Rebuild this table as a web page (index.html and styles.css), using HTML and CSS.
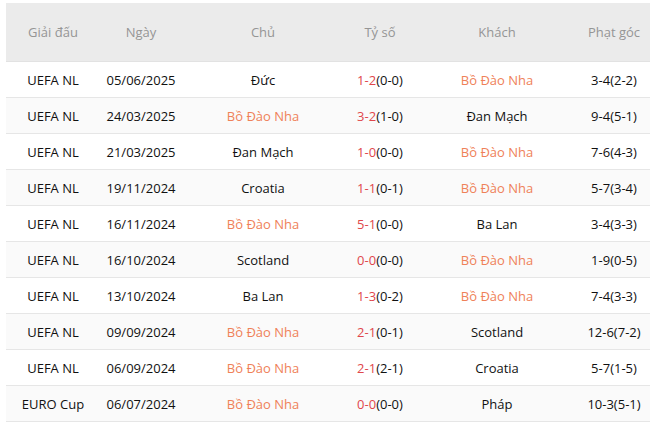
FILE: index.html
```html
<!DOCTYPE html>
<html lang="vi">
<head>
<meta charset="utf-8">
<link rel="stylesheet" href="styles.css">
</head>
<body>
<table class="tbl">
  <colgroup>
    <col class="c1"><col class="c2"><col class="c3"><col class="c4"><col class="c5"><col class="c6">
  </colgroup>
  <thead>
    <tr><th>Giải đấu</th><th>Ngày</th><th>Chủ</th><th>Tỷ số</th><th>Khách</th><th>Phạt góc</th></tr>
  </thead>
  <tbody>
    <tr><td>UEFA NL</td><td>05/06/2025</td><td>Đức</td><td><span class="ft">1-2</span>(0-0)</td><td class="pt">Bồ Đào Nha</td><td>3-4(2-2)</td></tr>
    <tr><td>UEFA NL</td><td>24/03/2025</td><td class="pt">Bồ Đào Nha</td><td><span class="ft">3-2</span>(1-0)</td><td>Đan Mạch</td><td>9-4(5-1)</td></tr>
    <tr><td>UEFA NL</td><td>21/03/2025</td><td>Đan Mạch</td><td><span class="ft">1-0</span>(0-0)</td><td class="pt">Bồ Đào Nha</td><td>7-6(4-3)</td></tr>
    <tr><td>UEFA NL</td><td>19/11/2024</td><td>Croatia</td><td><span class="ft">1-1</span>(0-1)</td><td class="pt">Bồ Đào Nha</td><td>5-7(3-4)</td></tr>
    <tr><td>UEFA NL</td><td>16/11/2024</td><td class="pt">Bồ Đào Nha</td><td><span class="ft">5-1</span>(0-0)</td><td>Ba Lan</td><td>3-4(3-3)</td></tr>
    <tr><td>UEFA NL</td><td>16/10/2024</td><td>Scotland</td><td><span class="ft">0-0</span>(0-0)</td><td class="pt">Bồ Đào Nha</td><td>1-9(0-5)</td></tr>
    <tr><td>UEFA NL</td><td>13/10/2024</td><td>Ba Lan</td><td><span class="ft">1-3</span>(0-2)</td><td class="pt">Bồ Đào Nha</td><td>7-4(3-3)</td></tr>
    <tr><td>UEFA NL</td><td>09/09/2024</td><td class="pt">Bồ Đào Nha</td><td><span class="ft">2-1</span>(0-1)</td><td>Scotland</td><td>12-6(7-2)</td></tr>
    <tr><td>UEFA NL</td><td>06/09/2024</td><td class="pt">Bồ Đào Nha</td><td><span class="ft">2-1</span>(2-1)</td><td>Croatia</td><td>5-7(1-5)</td></tr>
    <tr><td>EURO Cup</td><td>06/07/2024</td><td class="pt">Bồ Đào Nha</td><td><span class="ft">0-0</span>(0-0)</td><td>Pháp</td><td>10-3(5-1)</td></tr>
  </tbody>
</table>
</body>
</html>
```
FILE: styles.css
```css
html, body {
  margin: 0;
  padding: 0;
  background: #ffffff;
}
body {
  padding: 3px 0 0 6px;
  font-family: "Open Sans", "Liberation Sans", sans-serif;
  font-size: 13px;
  color: #111;
}
.tbl {
  border-collapse: collapse;
  table-layout: fixed;
  width: 644px;
}
.c1 { width: 94px; }
.c2 { width: 82px; }
.c3 { width: 162px; }
.c4 { width: 72px; }
.c5 { width: 162px; }
.c6 { width: 72px; }
.tbl th {
  height: 58px;
  padding: 0;
  background: #ebebeb;
  color: #959595;
  font-weight: normal;
  text-align: center;
  border-bottom: 1px solid #e2e2e2;
}
.tbl td {
  height: 35px;
  padding: 0;
  text-align: center;
  white-space: nowrap;
  border-bottom: 1px solid #e6e6e6;
  background: #fff;
}
.tbl tbody tr:nth-child(even) td {
  background: #fafafa;
}
.pt { color: #ef8158; }
.ft { color: #e0474c; }
```
